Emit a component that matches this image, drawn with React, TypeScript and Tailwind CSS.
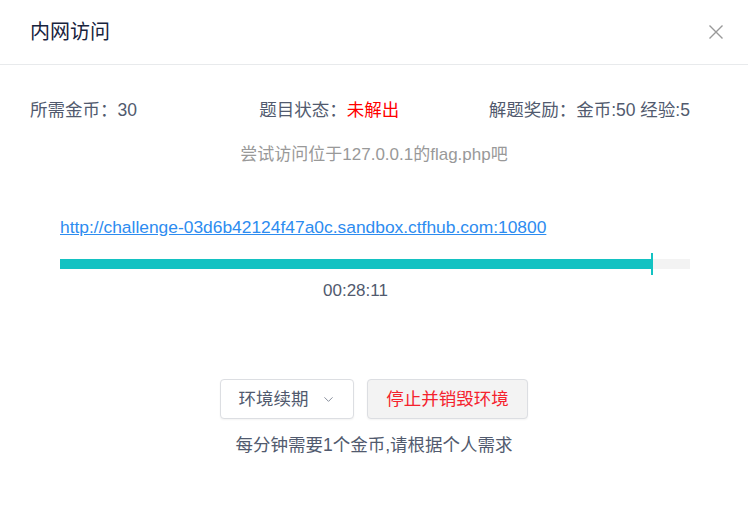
import { ChevronDown } from 'lucide-react';

const FONT = "font-['Microsoft_YaHei','Liberation_Sans','Noto_Sans_CJK_SC',sans-serif]";

export default function App() {
  const progress = 94;

  return (
    <div className={`w-[748px] h-[521px] bg-white text-[#515a6e] ${FONT}`}>
      {/* header */}
      <div className="h-[65px] border-b border-[#e8eaec] flex items-center justify-between pl-[30px] pr-[24px]">
        <span className="text-[20px] text-[#17233d]">内网访问</span>
        <svg width="16" height="16" viewBox="0 0 16 16" className="text-[#999]">
          <path d="M1.5 1.5 L14.5 14.5 M14.5 1.5 L1.5 14.5" stroke="currentColor" strokeWidth="1.4" fill="none" />
        </svg>
      </div>

      {/* info */}
      <div className="grid grid-cols-3 px-[30px] pt-[33px] text-[17.5px] leading-[24px]">
        <span>所需金币：30</span>
        <span>
          题目状态：<span className="text-[#ff0000]">未解出</span>
        </span>
        <span>解题奖励：金币:50 经验:5</span>
      </div>
      <div className="text-center text-[17px] leading-[24px] text-[#999] mt-[21px]">
        尝试访问位于127.0.0.1的flag.php吧
      </div>

      {/* env */}
      <div className="px-[60px] pt-[48px]">
        <a href="#" className="text-[#2d8cf0] underline text-[17.4px] leading-[24px]">
          http://challenge-03d6b42124f47a0c.sandbox.ctfhub.com:10800
        </a>
        <div className="relative w-[630px] h-[10px] mt-[19px] bg-[#f3f3f3]">
          <div className="h-full bg-[#13c2c2]" style={{ width: `${progress}%` }} />
          <div
            className="absolute top-[-6px] bottom-[-6px] w-[2px] bg-[#13c2c2]"
            style={{ left: `calc(${progress}% - 1px)` }}
          />
        </div>
        <div className="pl-[263px] pt-[11px] text-[17px] leading-[22px] text-[#515a6e]">00:28:11</div>
      </div>

      {/* actions */}
      <div className="flex justify-center gap-[13px] mt-[77px]">
        <button className="h-[40px] w-[134px] flex items-center justify-center gap-[12px] rounded-[4px] border border-[#dcdee2] bg-white text-[17.5px] text-[#515a6e] shadow-[0_1px_2px_rgba(0,0,0,0.05)]">
          环境续期
          <ChevronDown size={15} strokeWidth={1.5} className="text-[#808695]" />
        </button>
        <button className="h-[40px] w-[161px] rounded-[4px] border border-[#dcdee2] bg-[#f3f3f3] text-[17.5px] text-[#f5222d] shadow-[0_1px_2px_rgba(0,0,0,0.05)]">
          停止并销毁环境
        </button>
      </div>
      <div className="text-center text-[17.5px] leading-[24px] mt-[14px]">每分钟需要1个金币,请根据个人需求</div>
    </div>
  );
}
